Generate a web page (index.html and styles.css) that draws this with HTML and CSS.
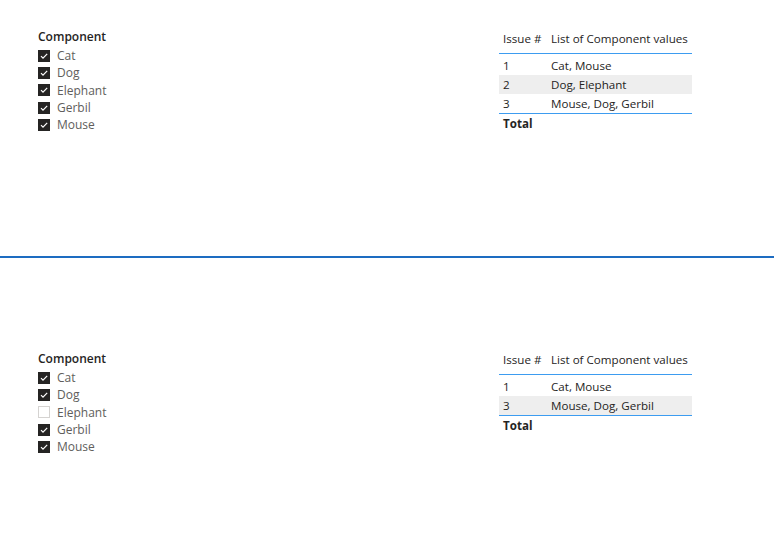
FILE: index.html
```html
<!DOCTYPE html>
<html>
<head>
<meta charset="utf-8">
<link rel="stylesheet" href="styles.css">
</head>
<body>
<section class="panel panel-top">
  <div class="slicer">
    <div class="slicer-title">Component</div>
    <ul class="items">
      <li class="item"><span class="box on"><svg viewBox="0 0 12 12"><path d="M3 6.2 L5 8.2 L9.2 3.8"/></svg></span>Cat</li>
      <li class="item"><span class="box on"><svg viewBox="0 0 12 12"><path d="M3 6.2 L5 8.2 L9.2 3.8"/></svg></span>Dog</li>
      <li class="item"><span class="box on"><svg viewBox="0 0 12 12"><path d="M3 6.2 L5 8.2 L9.2 3.8"/></svg></span>Elephant</li>
      <li class="item"><span class="box on"><svg viewBox="0 0 12 12"><path d="M3 6.2 L5 8.2 L9.2 3.8"/></svg></span>Gerbil</li>
      <li class="item"><span class="box on"><svg viewBox="0 0 12 12"><path d="M3 6.2 L5 8.2 L9.2 3.8"/></svg></span>Mouse</li>
    </ul>
  </div>
  <table class="grid">
    <thead><tr><th class="c1">Issue #</th><th class="c2">List of Component values</th></tr></thead>
    <tbody>
      <tr class="first"><td>1</td><td>Cat, Mouse</td></tr>
      <tr class="alt"><td>2</td><td>Dog, Elephant</td></tr>
      <tr><td>3</td><td>Mouse, Dog, Gerbil</td></tr>
    </tbody>
    <tfoot><tr><td>Total</td><td></td></tr></tfoot>
  </table>
</section>
<div class="divider"></div>
<section class="panel panel-bottom">
  <div class="slicer">
    <div class="slicer-title">Component</div>
    <ul class="items">
      <li class="item"><span class="box on"><svg viewBox="0 0 12 12"><path d="M3 6.2 L5 8.2 L9.2 3.8"/></svg></span>Cat</li>
      <li class="item"><span class="box on"><svg viewBox="0 0 12 12"><path d="M3 6.2 L5 8.2 L9.2 3.8"/></svg></span>Dog</li>
      <li class="item"><span class="box off"></span>Elephant</li>
      <li class="item"><span class="box on"><svg viewBox="0 0 12 12"><path d="M3 6.2 L5 8.2 L9.2 3.8"/></svg></span>Gerbil</li>
      <li class="item"><span class="box on"><svg viewBox="0 0 12 12"><path d="M3 6.2 L5 8.2 L9.2 3.8"/></svg></span>Mouse</li>
    </ul>
  </div>
  <table class="grid">
    <thead><tr><th class="c1">Issue #</th><th class="c2">List of Component values</th></tr></thead>
    <tbody>
      <tr class="first"><td>1</td><td>Cat, Mouse</td></tr>
      <tr class="alt"><td>3</td><td>Mouse, Dog, Gerbil</td></tr>
    </tbody>
    <tfoot><tr><td>Total</td><td></td></tr></tfoot>
  </table>
</section>
</body>
</html>
```
FILE: styles.css
```css
html, body {
  margin: 0;
  padding: 0;
  background: #ffffff;
}
body {
  font-family: "Open Sans", "Noto Sans", sans-serif;
  font-size: 12px;
  color: #252423;
}
.panel {
  display: flex;
  justify-content: space-between;
  align-items: flex-start;
  padding-left: 38px;
  padding-right: 82px;
  box-sizing: border-box;
}
.panel-top {
  height: 256px;
  padding-top: 28px;
}
.panel-bottom {
  padding-top: 92px;
}
.divider {
  height: 2px;
  background: #1d6cc1;
}
.slicer-title {
  font-weight: 600;
  font-size: 12px;
  line-height: 17px;
  color: #252423;
  margin-bottom: 2px;
}
.items {
  list-style: none;
  margin: 0;
  padding: 0;
}
.item {
  display: flex;
  align-items: center;
  gap: 7px;
  height: 17.3px;
  color: #605e5c;
  font-size: 12px;
}
.box {
  width: 12px;
  height: 12px;
  box-sizing: border-box;
  display: flex;
}
.box.on {
  background: #252423;
}
.box.off {
  border: 1px solid #d5d3d1;
  background: #fff;
}
.box svg {
  width: 12px;
  height: 12px;
}
.box path {
  fill: none;
  stroke: #ffffff;
  stroke-width: 1.2;
}
.grid {
  border-collapse: separate;
  border-spacing: 0;
  table-layout: fixed;
  width: 193px;
  font-size: 11.6px;
  line-height: 18px;
  margin-top: 1px;
}
.panel-bottom .grid {
  margin-top: 0;
}
.grid th {
  font-weight: 400;
  text-align: left;
  padding: 1px 3px 5px 4px;
  height: 18px;
  color: #252423;
  border-bottom: 1px solid #3d9cf0;
  white-space: nowrap;
}
.grid td {
  padding: 0 3px 0 4px;
  height: 19px;
  color: #252423;
  white-space: nowrap;
}
.grid th.c1 { width: 41px; }
.grid tr.first td { padding-top: 2px; }
.grid tr.alt td {
  background: #eeeeee;
}
.grid tfoot td {
  border-top: 1px solid #3d9cf0;
  font-weight: 700;
  height: 19px;
}
```
